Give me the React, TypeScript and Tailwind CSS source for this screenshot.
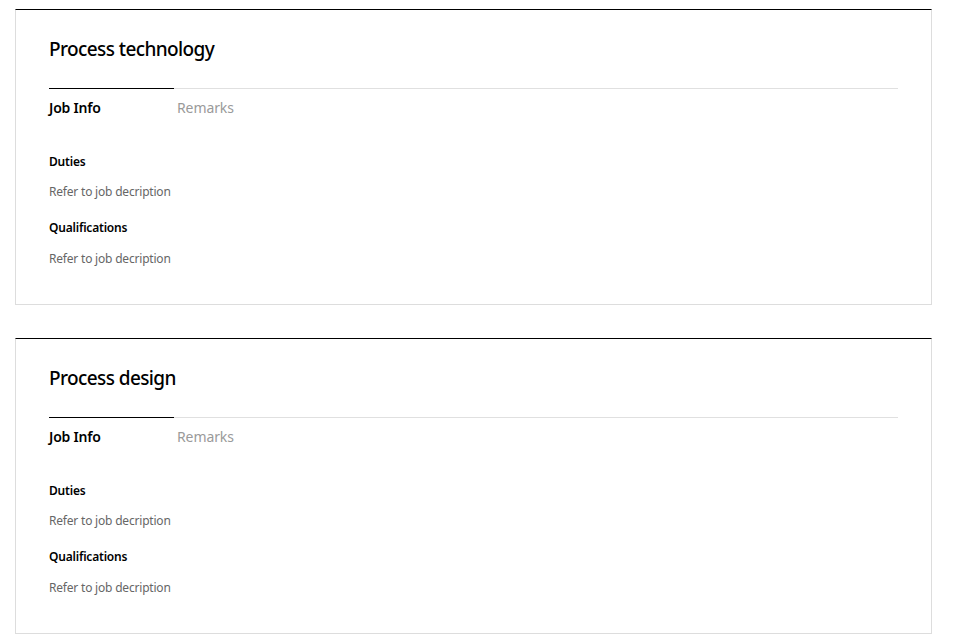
const jobs = [
  { title: 'Process technology' },
  { title: 'Process design' },
]

function JobCard({ title }: { title: string }) {
  return (
    <div className="border border-[#dddddd] border-t-black px-[33px] pb-[37px]">
      <h2 className="pt-[25px] text-[19px] leading-[28px] font-medium tracking-[-0.6px] text-black">{title}</h2>

      <div className="mt-[25px] flex border-t border-[#e0e0e0]">
        <div className="-mt-px w-[125px] border-t border-black pt-[9px] text-[14px] leading-[20px] font-semibold tracking-[-0.2px] text-black">
          Job Info
        </div>
        <div className="pl-[3px] pt-[9px] text-[14px] leading-[20px] tracking-[-0.1px] text-[#9a9a9a]">Remarks</div>
      </div>

      <div className="mt-[36px] text-[12px] leading-[16px] tracking-[-0.2px]">
        <p className="font-semibold text-black">Duties</p>
        <p className="mt-[14px] text-[#666666]">Refer to job decription</p>
        <p className="mt-[20px] font-semibold text-black">Qualifications</p>
        <p className="mt-[15px] text-[#666666]">Refer to job decription</p>
      </div>
    </div>
  )
}

export default function App() {
  return (
    <div className="min-h-screen bg-white pt-[9px] pl-[15px] pr-[26px] font-['Noto_Sans',sans-serif]">
      <div className="flex flex-col gap-[33px]">
        {jobs.map((j) => (
          <JobCard key={j.title} title={j.title} />
        ))}
      </div>
    </div>
  )
}
